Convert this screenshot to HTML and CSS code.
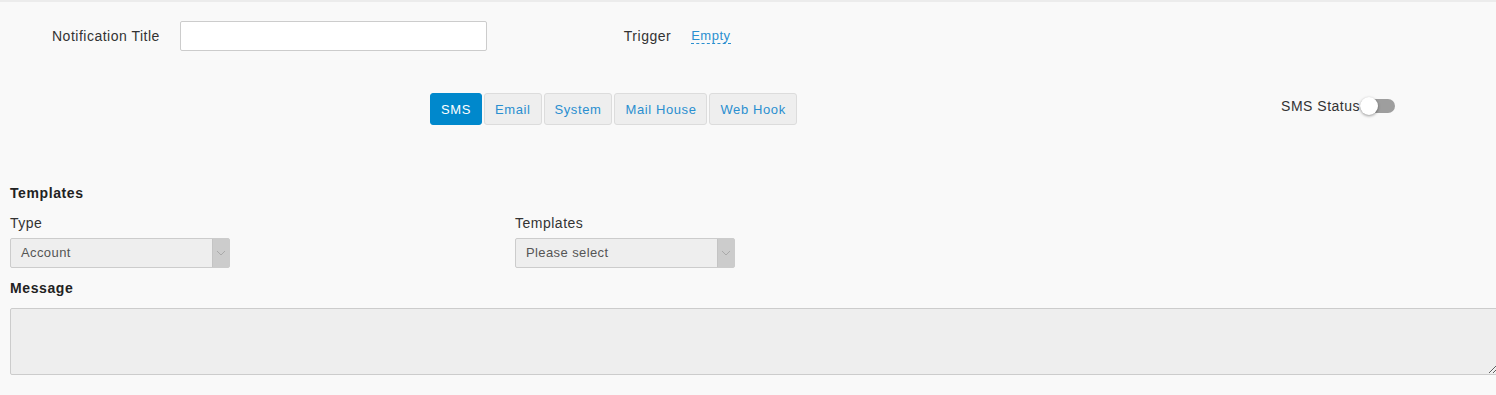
FILE: index.html
```html
<!DOCTYPE html>
<html lang="en">
    <head>
        <meta charset="UTF-8" />
        <meta name="viewport" content="width=device-width, initial-scale=1.0" />
        <title>Notification</title>
        <link rel="stylesheet" href="styles.css">
    </head>
    <body>
        <main>
            <div class="title-row">
                <label for="n-title">Notification Title</label>
                <input type="text" id="n-title" name="title" />
                <span class="trigger-label">Trigger</span>
                <a href="#" class="editable">Empty</a>
            </div>
            <div class="channel-row">
                <div class="tabs">
                    <button class="tab active">SMS</button>
                    <button class="tab">Email</button>
                    <button class="tab">System</button>
                    <button class="tab">Mail House</button>
                    <button class="tab">Web Hook</button>
                </div>
                <div class="status">
                    <span>SMS Status</span>
                    <span class="switch"><span class="knob"></span></span>
                </div>
            </div>
            <section class="templates">
                <h2>Templates</h2>
                <div class="fields">
                    <div class="field">
                        <label>Type</label>
                        <div class="select">
                            <span>Account</span>
                            <span class="arrow">
                                <svg width="10" height="6" viewBox="0 0 10 6"><path d="M1 1l4 4 4-4" fill="none" stroke="#aaa" stroke-width="1"/></svg>
                            </span>
                        </div>
                    </div>
                    <div class="field">
                        <label>Templates</label>
                        <div class="select">
                            <span>Please select</span>
                            <span class="arrow">
                                <svg width="10" height="6" viewBox="0 0 10 6"><path d="M1 1l4 4 4-4" fill="none" stroke="#aaa" stroke-width="1"/></svg>
                            </span>
                        </div>
                    </div>
                </div>
                <h2>Message</h2>
                <textarea class="message" disabled></textarea>
            </section>
        </main>
    </body>
</html>
```

FILE: styles.css
```css
* {
    box-sizing: border-box;
}
html,
body {
    margin: 0;
    overflow: hidden;
}
body {
    background-color: #f9f9f9;
    color: #333;
    font-family: "Liberation Sans", Arial, Helvetica, sans-serif;
    font-size: 14px;
    letter-spacing: 0.5px;
    border-top: 2px solid #ececec;
}
.title-row {
    display: flex;
    align-items: center;
    padding: 19px 0 0 52px;
    height: 49px;
}
.title-row label {
    margin-right: 20px;
}
.title-row input {
    width: 307px;
    height: 30px;
    border: 1px solid #ccc;
    border-radius: 2px;
    background-color: #fff;
    font-family: inherit;
    font-size: 14px;
    outline: none;
}
.trigger-label {
    margin-left: 137px;
    margin-right: 20px;
}
.editable {
    color: #2a8fd0;
    font-size: 13px;
    text-decoration: none;
    border-bottom: 1px dashed #2a8fd0;
    line-height: 14px;
}
.channel-row {
    display: flex;
    justify-content: space-between;
    align-items: flex-start;
    margin-top: 42px;
    padding: 0 101px 0 430px;
}
.tabs {
    display: flex;
    gap: 2px;
}
.tab {
    height: 32px;
    padding: 0 10px;
    border: 1px solid #dcdcdc;
    border-radius: 3px;
    background-color: #eee;
    color: #2a8fd0;
    font-family: inherit;
    font-size: 13px;
    letter-spacing: 0.6px;
}
.tab.active {
    background-color: #0088cc;
    border-color: #0088cc;
    color: #fff;
}
.status {
    display: flex;
    align-items: center;
    margin-top: 4px;
    height: 18px;
}
.switch {
    position: relative;
    width: 35px;
    height: 14px;
    border-radius: 7px;
    background-color: #9e9e9e;
}
.switch .knob {
    position: absolute;
    left: 0;
    top: -2px;
    width: 18px;
    height: 18px;
    border-radius: 50%;
    background-color: #fff;
    box-shadow: 0 1px 3px rgba(0, 0, 0, 0.4);
}
.templates {
    padding: 58px 0 0 10px;
}
.templates h2 {
    margin: 0;
    font-size: 14px;
    line-height: 20px;
    font-weight: bold;
    color: #222;
    letter-spacing: 0.6px;
}
.fields {
    display: flex;
    gap: 285px;
    margin-bottom: 10px;
}
.field label {
    display: block;
    line-height: 20px;
    margin: 10px 0 5px;
}
.select {
    display: flex;
    width: 220px;
    height: 30px;
    border: 1px solid #ccc;
    border-radius: 2px;
    background-color: #eee;
    color: #555;
    font-size: 13px;
}
.select span:first-child {
    flex: 1;
    padding-left: 10px;
    line-height: 28px;
    letter-spacing: 0.4px;
}
.select .arrow {
    display: flex;
    align-items: center;
    justify-content: center;
    width: 17px;
    background-color: #ccc;
    border-left: 1px solid #c4c4c4;
}
.message {
    display: block;
    width: 1488px;
    height: 67px;
    margin-top: 10px;
    border: 1px solid #ccc;
    border-radius: 2px;
    background-color: #eee;
}
```
